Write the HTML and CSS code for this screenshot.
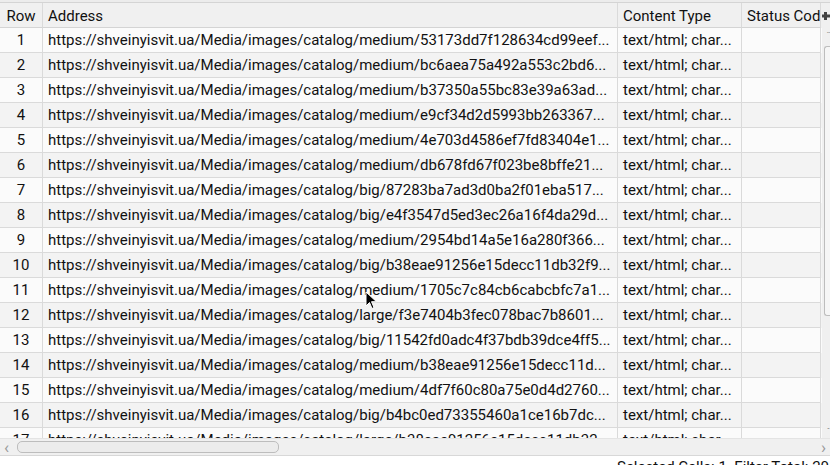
FILE: index.html
```html
<!DOCTYPE html>
<html>
<head>
<meta charset="utf-8">
<link rel="stylesheet" href="styles.css">
</head>
<body>
<div class="app">
  <div class="topstrip"></div>
  <div class="main">
    <div class="grid">
      <div class="row head">
        <div class="cell c-row">Row</div>
        <div class="cell">Address</div>
        <div class="cell">Content Type</div>
        <div class="cell">Status Cod</div>
      </div>
      <div class="body">
        <div class="row"><div class="cell c-row">1</div><div class="cell">https://shveinyisvit.ua/Media/images/catalog/medium/53173dd7f128634cd99eef...</div><div class="cell">text/html; char...</div><div class="cell"></div></div>
        <div class="row alt"><div class="cell c-row">2</div><div class="cell">https://shveinyisvit.ua/Media/images/catalog/medium/bc6aea75a492a553c2bd6...</div><div class="cell">text/html; char...</div><div class="cell"></div></div>
        <div class="row"><div class="cell c-row">3</div><div class="cell">https://shveinyisvit.ua/Media/images/catalog/medium/b37350a55bc83e39a63ad...</div><div class="cell">text/html; char...</div><div class="cell"></div></div>
        <div class="row alt"><div class="cell c-row">4</div><div class="cell">https://shveinyisvit.ua/Media/images/catalog/medium/e9cf34d2d5993bb263367...</div><div class="cell">text/html; char...</div><div class="cell"></div></div>
        <div class="row"><div class="cell c-row">5</div><div class="cell">https://shveinyisvit.ua/Media/images/catalog/medium/4e703d4586ef7fd83404e1...</div><div class="cell">text/html; char...</div><div class="cell"></div></div>
        <div class="row alt"><div class="cell c-row">6</div><div class="cell">https://shveinyisvit.ua/Media/images/catalog/medium/db678fd67f023be8bffe21...</div><div class="cell">text/html; char...</div><div class="cell"></div></div>
        <div class="row"><div class="cell c-row">7</div><div class="cell">https://shveinyisvit.ua/Media/images/catalog/big/87283ba7ad3d0ba2f01eba517...</div><div class="cell">text/html; char...</div><div class="cell"></div></div>
        <div class="row alt"><div class="cell c-row">8</div><div class="cell">https://shveinyisvit.ua/Media/images/catalog/big/e4f3547d5ed3ec26a16f4da29d...</div><div class="cell">text/html; char...</div><div class="cell"></div></div>
        <div class="row"><div class="cell c-row">9</div><div class="cell">https://shveinyisvit.ua/Media/images/catalog/medium/2954bd14a5e16a280f366...</div><div class="cell">text/html; char...</div><div class="cell"></div></div>
        <div class="row alt"><div class="cell c-row">10</div><div class="cell">https://shveinyisvit.ua/Media/images/catalog/big/b38eae91256e15decc11db32f9...</div><div class="cell">text/html; char...</div><div class="cell"></div></div>
        <div class="row"><div class="cell c-row">11</div><div class="cell">https://shveinyisvit.ua/Media/images/catalog/medium/1705c7c84cb6cabcbfc7a1...</div><div class="cell">text/html; char...</div><div class="cell"></div></div>
        <div class="row alt"><div class="cell c-row">12</div><div class="cell">https://shveinyisvit.ua/Media/images/catalog/large/f3e7404b3fec078bac7b8601...</div><div class="cell">text/html; char...</div><div class="cell"></div></div>
        <div class="row"><div class="cell c-row">13</div><div class="cell">https://shveinyisvit.ua/Media/images/catalog/big/11542fd0adc4f37bdb39dce4ff5...</div><div class="cell">text/html; char...</div><div class="cell"></div></div>
        <div class="row alt"><div class="cell c-row">14</div><div class="cell">https://shveinyisvit.ua/Media/images/catalog/medium/b38eae91256e15decc11d...</div><div class="cell">text/html; char...</div><div class="cell"></div></div>
        <div class="row"><div class="cell c-row">15</div><div class="cell">https://shveinyisvit.ua/Media/images/catalog/medium/4df7f60c80a75e0d4d2760...</div><div class="cell">text/html; char...</div><div class="cell"></div></div>
        <div class="row alt"><div class="cell c-row">16</div><div class="cell">https://shveinyisvit.ua/Media/images/catalog/big/b4bc0ed73355460a1ce16b7dc...</div><div class="cell">text/html; char...</div><div class="cell"></div></div>
        <div class="row"><div class="cell c-row">17</div><div class="cell">https://shveinyisvit.ua/Media/images/catalog/large/b38eae91256e15decc11db32...</div><div class="cell">text/html; char...</div><div class="cell"></div></div>
      </div>
    </div>
    <div class="vside">
      <div class="corner"><svg width="8" height="10" viewBox="0 0 8 10"><path d="M0 5h8M3.5 1v8" stroke="#444" stroke-width="3"/></svg></div>
      <div class="vscroll">
        <span class="arrow up">&#710;</span>
        <div class="vthumb"></div>
        <span class="arrow down">&#711;</span>
      </div>
    </div>
  </div>
  <div class="hscroll">
    <span class="harrow">&lsaquo;</span>
    <div class="hthumb"></div>
    <span class="harrow right">&rsaquo;</span>
  </div>
  <div class="status">Selected Cells: 1&nbsp;&nbsp;Filter Total: 20</div>
  <svg class="cursor" width="12" height="19" viewBox="0 0 12 19"><path d="M1 1v14l3.5-3.5 2.5 6 2-1-2.5-5.8h5z" fill="#000" stroke="#fff" stroke-width="1"/></svg>
</div>
</body>
</html>
```
FILE: styles.css
```css
* { box-sizing: border-box; }
html, body { margin: 0; padding: 0; }
body {
  width: 830px;
  height: 465px;
  overflow: hidden;
  background: #fff;
  font-family: Roboto, "Liberation Sans", sans-serif;
  font-size: 15px;
  color: #111;
}
.app {
  position: relative;
  display: flex;
  flex-direction: column;
  width: 830px;
  height: 465px;
}
.topstrip {
  height: 3px;
  background: #ececec;
  border-bottom: 1px solid #d4d4d4;
  flex: none;
}
.main {
  display: flex;
  height: 435px;
  flex: none;
}
.grid {
  width: 822px;
  overflow: hidden;
  display: flex;
  flex-direction: column;
}
.row {
  display: grid;
  grid-template-columns: 43px 575px 124px 79px;
  height: 25px;
  background: #fbfbfb;
  flex: none;
}
.row.alt { background: #f3f3f3; }
.row.head {
  background: #f0f0f0;
  height: 25px;
}
.body {
  display: flex;
  flex-direction: column;
  overflow: hidden;
  flex: 1;
}
.cell {
  border-right: 1px solid #dadada;
  border-bottom: 1px solid #dadada;
  padding: 0 0 0 5px;
  white-space: nowrap;
  overflow: hidden;
  line-height: 24px;
}
.head .cell { border-bottom: 1px solid #d4d4d4; line-height: 24px; padding-top: 1px; }
.head .c-row { padding-top: 1px; }
.c-row { text-align: center; padding: 0; }
.vside {
  width: 8px;
  display: flex;
  flex-direction: column;
  background: #f0f0f0;
}
.corner {
  height: 25px;
  display: flex;
  align-items: center;
  justify-content: flex-end;
  overflow: hidden;
}
.vscroll {
  flex: 1;
  position: relative;
  display: flex;
  flex-direction: column;
  align-items: flex-end;
}
.vthumb {
  margin-top: 6px;
  width: 6px;
  height: 270px;
  border: 1px solid #bdbdbd;
  border-right: none;
  border-radius: 3px 0 0 3px;
  background: #f6f6f6;
}
.arrow {
  font-size: 11px;
  line-height: 10px;
  height: 8px;
  color: #888;
  width: 4px;
  overflow: hidden;
}
.arrow.up { margin-top: 4px; }
.arrow.down { margin-top: auto; margin-bottom: 2px; }
.hscroll {
  height: 18px;
  flex: none;
  background: #f0f0f0;
  border-top: 1px solid #e4e4e4;
  border-bottom: 1px solid #d8d8d8;
  display: flex;
  align-items: center;
  padding: 0 4px 0 4px;
}
.harrow {
  color: #999;
  font-size: 17px;
  line-height: 14px;
  width: 10px;
}
.harrow.right { margin-left: auto; text-align: right; }
.hthumb {
  margin-left: 3px;
  width: 262px;
  height: 12px;
  border: 1px solid #bdbdbd;
  border-radius: 5px;
  background: #ececec;
}
.status {
  padding-left: 617px;
  white-space: nowrap;
  line-height: 16px;
  padding-top: 3px;
  color: #111;
}
.cursor {
  position: absolute;
  left: 365px;
  top: 291px;
}
```
